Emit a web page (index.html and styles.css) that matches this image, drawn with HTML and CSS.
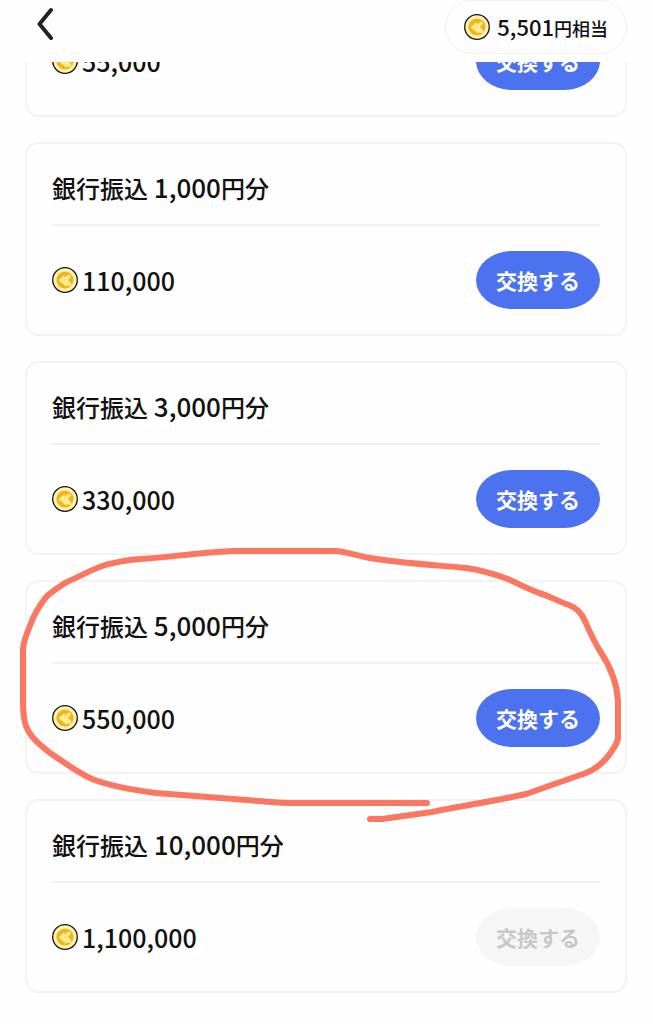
FILE: index.html
```html
<!DOCTYPE html>
<html lang="ja">
<head>
    <meta charset="UTF-8">
    <meta name="viewport" content="width=device-width, initial-scale=1.0">
    <title>銀行振込</title>
    <link rel="stylesheet" href="styles.css">
</head>
<body>
    <!-- Coin shared by the header and every card -->
    <svg class="defs" aria-hidden="true">
        <symbol id="coin" viewBox="0 0 26 26">
            <circle cx="13" cy="13" r="12.3" fill="#fff3ae" stroke="#161616" stroke-width="1.3"/>
            <circle cx="13" cy="13" r="8.6" fill="#f1b51c"/>
            <path d="M7 13.2L12.2 8.8V12L16 8.2H18L18.4 9.6L15.6 13L18.8 16.4V18.4H17L15 17.2V18.6L13.4 18.8L12.4 17.6Z" fill="#ffee9c" stroke="#ffee9c" stroke-width="0.8" stroke-linejoin="round"/>
            <path d="M15.4 13.2L12.6 12.2V15.4" fill="none" stroke="#f8d766" stroke-width="0.7"/>
        </symbol>
    </svg>

    <header class="header">
        <button class="back" type="button" aria-label="戻る">
            <svg width="16" height="34" viewBox="0 0 16 34"><path d="M14 3L2.5 17L14 31" fill="none" stroke="#222" stroke-width="4" stroke-linecap="round" stroke-linejoin="round"/></svg>
        </button>
        <div class="balance">
            <svg class="coin"><use href="#coin"/></svg>
            <span class="balance-text">5,501<span class="unit">円相当</span></span>
        </div>
    </header>

    <main class="scroller">
        <div class="list">
            <section class="card">
                <h2 class="title">銀行振込<span class="amount"> 500</span>円分</h2>
                <div class="row">
                    <span class="price"><svg class="coin"><use href="#coin"/></svg>55,000</span>
                    <button class="exchange" type="button">交換する</button>
                </div>
            </section>
            <section class="card">
                <h2 class="title">銀行振込<span class="amount"> 1,000</span>円分</h2>
                <div class="row">
                    <span class="price"><svg class="coin"><use href="#coin"/></svg>110,000</span>
                    <button class="exchange" type="button">交換する</button>
                </div>
            </section>
            <section class="card">
                <h2 class="title">銀行振込<span class="amount"> 3,000</span>円分</h2>
                <div class="row">
                    <span class="price"><svg class="coin"><use href="#coin"/></svg>330,000</span>
                    <button class="exchange" type="button">交換する</button>
                </div>
            </section>
            <section class="card marked">
                <h2 class="title">銀行振込<span class="amount"> 5,000</span>円分</h2>
                <div class="row">
                    <span class="price"><svg class="coin"><use href="#coin"/></svg>550,000</span>
                    <button class="exchange" type="button">交換する</button>
                </div>
                <!-- Hand-drawn circle -->
                <svg class="marker" viewBox="19 546 604 276" preserveAspectRatio="none" aria-hidden="true">
                    <path d="M427 802H294C280 802 272 801 258 800L156 792C132 789 110 785 92 778C78 772 64 761 50 752C40 744 30 736 26 725C23 717 23 710 23 700V648C24 636 30 626 33 617C37 609 42 601 47 595C54 589 59 586 65 582C78 576 91 569 102 565C115 561 128 559 140 558C166 557 190 552 234 550H336C348 551 358 555 370 557C400 562 435 564 466 567C481 569 494 573 508 578C518 583 528 588 539 592C550 595 557 600 569 604C577 607 582 613 585 620C589 629 594 641 600 650C608 662 617 680 618 700V737C617 744 613 748 609 754C603 762 596 768 586 772L526 793C496 800 455 806 432 811L382 818H370"/>
                </svg>
            </section>
            <section class="card">
                <h2 class="title">銀行振込<span class="amount"> 10,000</span>円分</h2>
                <div class="row">
                    <span class="price"><svg class="coin"><use href="#coin"/></svg>1,100,000</span>
                    <button class="exchange" type="button" disabled>交換する</button>
                </div>
            </section>
        </div>
    </main>
</body>
</html>
```
FILE: styles.css
```css
* {
    box-sizing: border-box;
}
body {
    margin: 0;
    height: 100vh;
    display: flex;
    flex-direction: column;
    background: #fefefe;
    color: #111;
    font-family: "Noto Sans CJK JP", sans-serif;
    font-weight: 500;
}
button {
    border: 0;
    font: inherit;
    cursor: pointer;
}
.defs {
    position: absolute;
    width: 0;
    height: 0;
}
.coin {
    width: 26px;
    height: 26px;
    flex: none;
}

/* Header */
.header {
    flex: none;
    height: 62px;
    display: flex;
    justify-content: space-between;
    align-items: flex-start;
    padding: 0 26px 0 25px;
}
.back {
    display: flex;
    padding: 7px 12px;
    background: none;
}
.balance {
    display: flex;
    align-items: center;
    gap: 7px;
    height: 54px;
    padding: 0 18px;
    border: 1px solid #f1f1f1;
    border-radius: 28px;
}
.balance-text {
    font-size: 22px;
    line-height: 28px;
}
.unit {
    font-size: 18px;
}

/* The list opens scrolled to its end */
.scroller {
    flex: 1;
    min-height: 0;
    display: flex;
    flex-direction: column-reverse;
    overflow-y: auto;
    scrollbar-width: none;
}
.list {
    display: flex;
    flex-direction: column;
    gap: 25px;
    padding: 25px 26px 31px 25px;
}
.card {
    border: 2px solid #f3f3f3;
    border-radius: 14px;
    padding: 0 25px;
}
.title {
    display: flex;
    align-items: baseline;
    height: 82px;
    margin: 0;
    padding: 25px 0 0;
    border-bottom: 2px solid #f1f1f1;
    font-size: 24px;
    font-weight: 500;
    line-height: 36px;
    white-space: pre;
}
.amount {
    font-size: 26px;
}
.row {
    display: flex;
    justify-content: space-between;
    align-items: center;
    padding: 25px 0;
}
.price {
    display: flex;
    align-items: center;
    gap: 4px;
    font-size: 25px;
    line-height: 36px;
}
.exchange {
    height: 58px;
    padding: 0 20px;
    border-radius: 36px / 29px;
    background: #4c72f0;
    color: #fff;
    font-size: 21px;
    font-weight: 700;
}
.exchange:disabled {
    background: #f6f6f6;
    color: #c8c8c8;
    cursor: default;
}

/* Marker over the chosen card */
.marked {
    position: relative;
    z-index: 1;
}
.marker {
    position: absolute;
    top: -35px;
    left: -8px;
    width: calc(100% + 6px);
    height: 276px;
    pointer-events: none;
}
.marker path {
    fill: none;
    stroke: #fb7762;
    stroke-width: 6px;
    stroke-linecap: round;
    stroke-linejoin: round;
}
```
